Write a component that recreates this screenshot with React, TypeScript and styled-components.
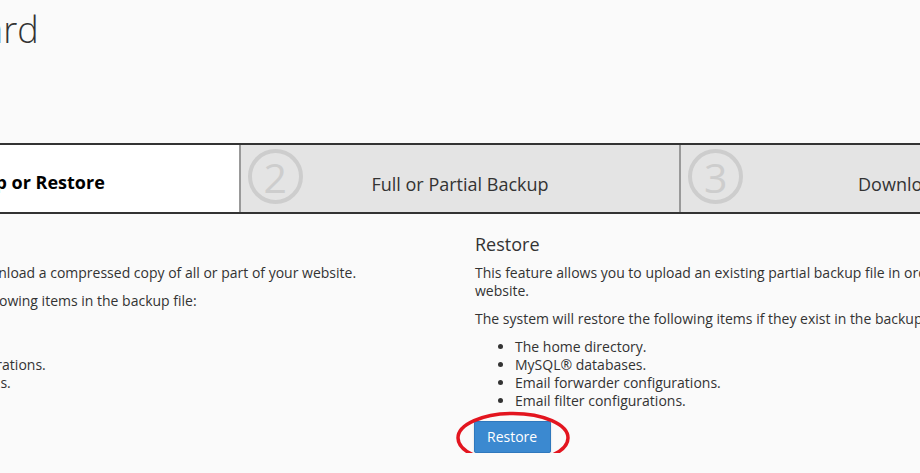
import React from "react";
import styled, { createGlobalStyle } from "styled-components";

const GlobalStyle = createGlobalStyle`
  html, body {
    margin: 0;
    padding: 0;
    background: #fafafa;
    overflow: hidden;
  }
  body {
    font-family: "Open Sans", "Liberation Sans", sans-serif;
    color: #333;
  }
`;

const Page = styled.div`
  width: 1320px;
  margin-left: -200px;
`;

const Title = styled.h1`
  margin: 10px 0 0 -1px;
  font-size: 36px;
  font-weight: 300;
  line-height: 40px;
  color: #333;
`;

const Steps = styled.div`
  display: flex;
  margin-top: 93px;
  border-top: 2px solid #333;
  border-bottom: 2px solid #333;
`;

const Step = styled.div<{ $active?: boolean; $first?: boolean }>`
  position: relative;
  flex: 1 1 0;
  height: 67px;
  box-sizing: border-box;
  display: flex;
  align-items: center;
  justify-content: center;
  padding-top: ${(p) => (p.$active ? "7px" : "12px")};
  background: ${(p) => (p.$active ? "#ffffff" : "#e4e4e4")};
  border-left: ${(p) => (p.$first ? "none" : "2px solid #999")};
  font-size: 18px;
  line-height: 25px;
  font-weight: ${(p) => (p.$active ? 700 : 400)};
  color: ${(p) => (p.$active ? "#000" : "#333")};
`;

const StepNumber = styled.span`
  position: absolute;
  left: 7px;
  top: 4px;
  width: 55px;
  height: 55px;
  box-sizing: border-box;
  border: 4px solid #cdcdcd;
  border-radius: 50%;
  display: flex;
  align-items: center;
  justify-content: center;
  font-size: 41px;
  font-weight: 400;
  line-height: 1;
  color: #cdcdcd;
  padding-top: 2px;
`;

const Columns = styled.div`
  display: grid;
  grid-template-columns: repeat(2, 1fr);
  column-gap: 75px;
  padding: 0 45px 0 0;
  margin-top: 18px;
`;

const Section = styled.section`
  display: flex;
  flex-direction: column;
  align-items: flex-start;
`;

const Heading = styled.h2`
  margin: 0;
  font-size: 18px;
  font-weight: 400;
  line-height: 24px;
  color: #333;
`;

const Para = styled.p<{ $first?: boolean }>`
  margin: ${(p) => (p.$first ? "8px" : "10px")} 0 0;
  font-size: 14px;
  line-height: 18px;
`;

const List = styled.ul`
  margin: 10px 0 0;
  padding-left: 40px;
  font-size: 14px;
  line-height: 18px;
`;

const ButtonWrap = styled.div`
  position: relative;
  margin: 11px 0 0 -1px;
`;

const PrimaryButton = styled.button`
  display: block;
  height: 32px;
  padding: 0 13px 0 12px;
  border: 1px solid #2f78bd;
  border-radius: 2px;
  background: #3b89d0;
  color: #fff;
  font-family: "Open Sans", "Liberation Sans", sans-serif;
  font-size: 14px;
  line-height: 30px;
  box-shadow: 0 1px 2px rgba(0, 0, 0, 0.15);
`;

const Annotation = styled.svg`
  position: absolute;
  left: -18px;
  top: -9px;
  overflow: visible;
  pointer-events: none;
`;

const steps = [
  { n: "1", label: "Back Up or Restore", active: true },
  { n: "2", label: "Full or Partial Backup" },
  { n: "3", label: "Download" },
];

export default function App() {
  return (
    <>
      <GlobalStyle />
      <Page>
        <Title>Backup Wizard</Title>
        <Steps>
          {steps.map((s, i) => (
            <Step key={s.n} $active={s.active} $first={i === 0}>
              <StepNumber>{s.n}</StepNumber>
              {s.label}
            </Step>
          ))}
        </Steps>
        <Columns>
          <Section>
            <Heading>Back Up</Heading>
            <Para $first>
              This feature allows you to download a compressed copy of all or part of your website.
            </Para>
            <Para>The system will include the following items in the backup file:</Para>
            <List>
              <li>The home directory.</li>
              <li>MySQL® databases.</li>
              <li>Email forwarder configurations.</li>
              <li>Email filter configurations.</li>
            </List>
          </Section>
          <Section>
            <Heading>Restore</Heading>
            <Para $first>
              This feature allows you to upload an existing partial backup file in order to restore
              your website.
            </Para>
            <Para>The system will restore the following items if they exist in the backup file:</Para>
            <List>
              <li>The home directory.</li>
              <li>MySQL® databases.</li>
              <li>Email forwarder configurations.</li>
              <li>Email filter configurations.</li>
            </List>
            <ButtonWrap>
              <PrimaryButton type="button">Restore</PrimaryButton>
              <Annotation width="114" height="52" viewBox="0 0 114 52">
                <ellipse
                  cx="57"
                  cy="26"
                  rx="55"
                  ry="24.5"
                  fill="none"
                  stroke="#e3151f"
                  strokeWidth="3.5"
                />
              </Annotation>
            </ButtonWrap>
          </Section>
        </Columns>
      </Page>
    </>
  );
}
